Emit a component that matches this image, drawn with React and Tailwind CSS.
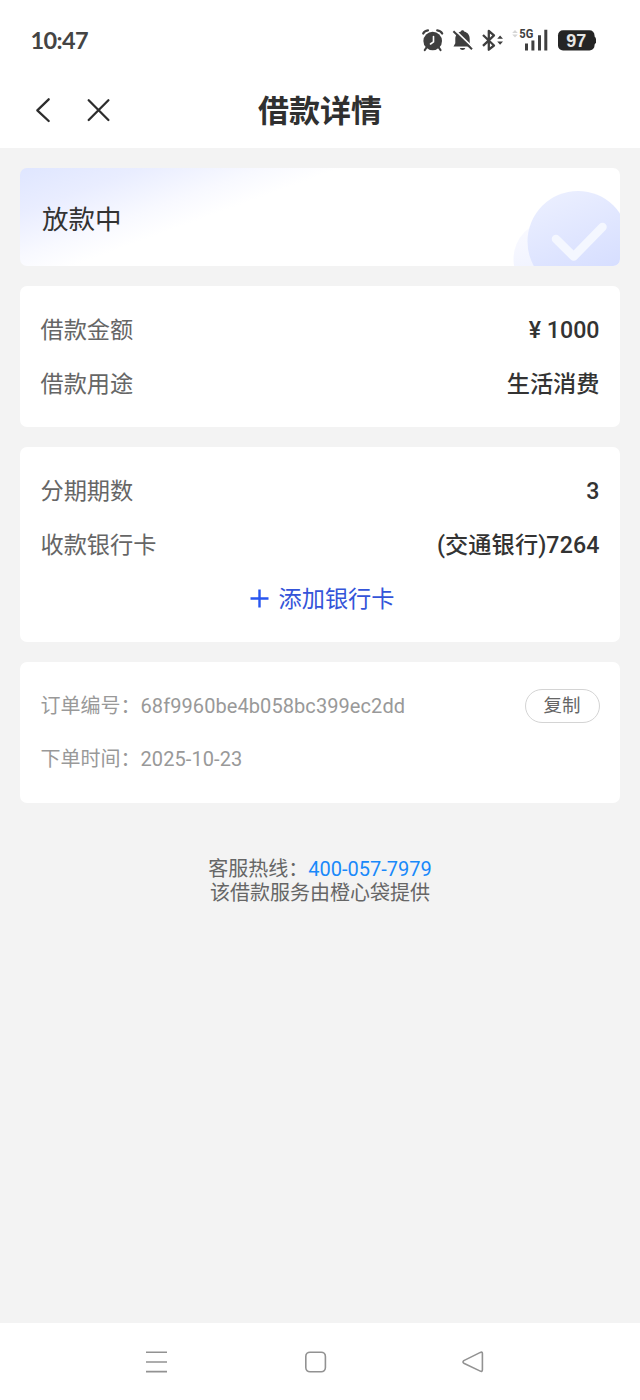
import React from "react";

function StatusBar() {
  return (
    <div className="flex h-[80px] items-center justify-between pl-[30.5px] pr-[44px] text-[#444]">
      <span className="font-['Lato'] text-[23.5px] leading-[24px] font-bold tracking-[-0.6px]">10:47</span>
      <svg width="176" height="28" viewBox="420 26 176 28" fill="none">
        <g stroke="#3f3f3f" strokeLinecap="round">
          <circle cx="432.7" cy="41" r="9.3" fill="#3f3f3f" stroke="none" />
          <path d="M423.2 33.5Q424.5 30.7 428 30.3M437.2 30.3Q440.8 30.7 442.2 33.5" strokeWidth="2.2" />
          <path d="M426.5 47.5L424.8 50M438.8 47.5L440.5 50" strokeWidth="2.2" />
          <path d="M433.5 36.5V41.8L430.5 44" stroke="#fff" strokeWidth="1.6" />
        </g>
        <path d="M453.5 46.5L455.3 43.2V39C455.3 35 458 32.3 460.5 31.8C461 29.7 464 29.7 464.5 31.8C467.8 32.5 469.7 35.3 469.7 39V43.2L471.6 46.5Z" fill="#3f3f3f" />
        <path d="M459.8 48H465.3Q464.8 50 462.5 50T459.8 48Z" fill="#3f3f3f" />
        <path d="M455 30.2L473.5 48.2" stroke="#fff" strokeWidth="1.8" />
        <path d="M453.4 31.2L472 49.3" stroke="#3f3f3f" strokeWidth="2" />
        <path d="M483 35L494 45.5L488.8 49.7V31L494 35.3L483 45.8" stroke="#3f3f3f" strokeWidth="2.3" strokeLinejoin="round" />
        <path d="M497.2 38.7L500.1 35.5L503 38.7ZM497.2 41.5H503L500.1 44.7Z" fill="#3f3f3f" />
        <path d="M512.2 33L515 30L517.8 33ZM512.2 34.6H517.8L515 37.5Z" fill="#d6d6d6" />
        <text x="519.3" y="38.2" fill="#3f3f3f" fontFamily="Roboto, sans-serif" fontSize="12.5" fontWeight="700" textLength="14" lengthAdjust="spacingAndGlyphs">5G</text>
        <path d="M525 43.5H528V50.5H525ZM531.4 40.5H534.4V50.5H531.4ZM538 35.2H541V50.5H538ZM544.3 29.8H547.3V50.5H544.3Z" fill="#3f3f3f" />
        <rect x="558" y="30.3" width="36.5" height="20.2" rx="5" fill="#252525" />
        <path d="M593.5 36Q596.2 37 596.2 40.5T593.5 45Z" fill="#252525" />
        <text x="566.3" y="46.9" fill="#e6e6e6" fontFamily="Liberation Sans, sans-serif" fontSize="18" fontWeight="700" textLength="20">97</text>
      </svg>
    </div>
  );
}

function Header() {
  return (
    <header className="grid h-[68px] grid-cols-[1fr_auto_1fr] items-center pb-[8px] text-[#303030]">
      <div className="flex items-center gap-[34px] pl-[34px]">
        <svg width="18" height="28" viewBox="0 0 18 28" fill="none" stroke="#2d2d2d" strokeWidth="2.3" strokeLinecap="round" strokeLinejoin="round">
          <path d="M14.7 3.3L3.3 14.3L14.7 25" />
        </svg>
        <svg width="25" height="28" viewBox="0 0 25 28" fill="none" stroke="#2d2d2d" strokeWidth="2.3" strokeLinecap="round">
          <path d="M2.7 4.3L22.4 24M22.4 4.3L2.7 24" />
        </svg>
      </div>
      <h1 className="pt-[4px] text-[31px] leading-[40px] font-bold">借款详情</h1>
    </header>
  );
}

function StatusCard() {
  return (
    <section className="flex h-[98px] items-center justify-between overflow-hidden rounded-[7px] bg-[linear-gradient(160deg,#dfe6ff_0%,#e9edff_14%,#f8f9ff_28%,#ffffff_37%)] pl-[22px]">
      <span className="pt-[5px] text-[26.5px] leading-[36px] text-[#333]">放款中</span>
      <svg width="110" height="98" viewBox="0 0 110 98" fill="none">
        <defs>
          <linearGradient id="disc" x1="45" y1="22" x2="85" y2="115" gradientUnits="userSpaceOnUse">
            <stop stopColor="#ebefff" />
            <stop offset="1" stopColor="#d5ddff" />
          </linearGradient>
          <linearGradient id="halo" x1="10" y1="55" x2="25" y2="105" gradientUnits="userSpaceOnUse">
            <stop stopColor="#fafaff" />
            <stop offset="1" stopColor="#f0f3ff" />
          </linearGradient>
        </defs>
        <circle cx="42" cy="91" r="38.5" fill="url(#halo)" />
        <circle cx="68" cy="73.5" r="50.5" fill="url(#disc)" />
        <path d="M46 71L63.7 88.5L92.5 59" stroke="#f4f7ff" strokeWidth="8.5" strokeLinecap="round" strokeLinejoin="round" />
      </svg>
    </section>
  );
}

function Card({ children }) {
  return <section className="rounded-[7px] bg-white px-[20.5px] pt-4 pb-[17px]">{children}</section>;
}

function Row({ label, value }) {
  return (
    <div className="flex h-[54px] items-center justify-between pt-px text-[23.2px] leading-[32px]">
      <span className="text-[#666]">{label}</span>
      <span className="font-medium text-[#333]">{value}</span>
    </div>
  );
}

export default function App() {
  return (
    <div className="flex h-[1400px] w-[640px] flex-col bg-[#f3f3f3] font-['Roboto','Noto_Sans_CJK_SC',sans-serif]" lang="zh-CN">
      <div className="bg-white">
        <StatusBar />
        <Header />
      </div>
      <main className="flex flex-1 flex-col gap-5 px-5 pt-5">
        <StatusCard />
        <Card>
          <Row label="借款金额" value="¥ 1000" />
          <Row label="借款用途" value="生活消费" />
        </Card>
        <Card>
          <Row label="分期期数" value="3" />
          <Row label="收款银行卡" value={<span className="tracking-[0.1px]">(交通银行)7264</span>} />
          <div className="flex h-[54px] items-center justify-center gap-[10px] pl-[4px] text-[23.2px] leading-[32px] text-[#3454d9]">
            <svg width="19" height="19" viewBox="0 0 19 19" stroke="#2856f0" strokeWidth="2.4">
              <path d="M.5 9.5H18.5M9.5 .5V18.5" />
            </svg>
            <span className="pt-px">添加银行卡</span>
          </div>
        </Card>
        <Card>
          <div className="flex h-[54px] items-center justify-between pt-px text-[20px] text-[#999]">
            <span>订单编号：<span className="tracking-[0.08px]">68f9960be4b058bc399ec2dd</span></span>
            <button className="flex h-[34px] w-[75px] items-center justify-center rounded-full border border-[#d4d4d4] pt-px text-[18.5px] leading-none text-[#666]">复制</button>
          </div>
          <div className="flex h-[54px] items-center text-[20px] text-[#999]"><span>下单时间：<span className="tracking-[0.08px]">2025-10-23</span></span></div>
        </Card>
        <footer className="mt-[34px] text-center text-[20px] leading-[24px] text-[#666]">
          <p>客服热线：<a className="text-[#1989fa]">400-057-7979</a></p>
          <p>该借款服务由橙心袋提供</p>
        </footer>
      </main>
      <nav className="flex h-[77px] items-center bg-white pl-[144px]">
        <svg width="342" height="26" viewBox="144 1348.5 342 26" fill="none" stroke="#929292" strokeWidth="1.6" strokeLinejoin="round">
          <path d="M146 1351.8H167M146 1361.5H167M146 1371.1H167" />
          <rect x="305.8" y="1351.7" width="19.6" height="19.6" rx="4.2" />
          <path d="M463.8 1360.1L480.4 1351.9Q482.4 1351.1 482.4 1353.1V1369.3Q482.4 1371.6 480.3 1370.6L463.8 1362.7Q462.2 1361.4 463.8 1360.1Z" />
        </svg>
      </nav>
    </div>
  );
}
